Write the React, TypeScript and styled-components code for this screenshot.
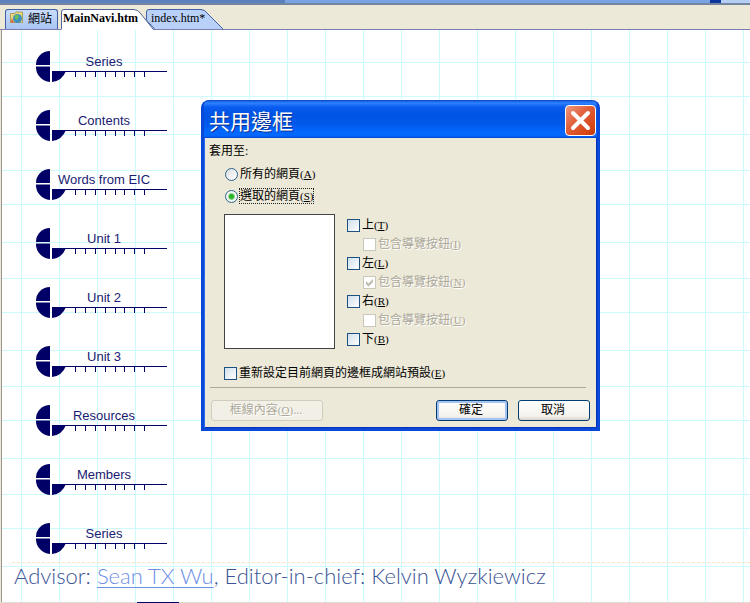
import React from "react";
import styled, { createGlobalStyle, css } from "styled-components";

const GlobalStyle = createGlobalStyle`
  * { box-sizing: border-box; }
  html, body { margin: 0; padding: 0; }
  body {
    font-family: "Liberation Serif", "Noto Sans CJK TC", serif;
    font-size: 12px;
    background: #ece9d8;
  }
`;

const Page = styled.div`
  position: relative;
  display: flex;
  flex-direction: column;
  min-height: 100vh;
`;

const WindowEdge = styled.div`
  display: flex;
  justify-content: flex-end;
  height: 5px;
  background: linear-gradient(90deg, #5b82bd 38%, #78a4e4 38%);
  border-bottom: 2px solid #75849f;
`;

const EdgeEnd = styled.div`
  width: 40px;
  border-left: 11px solid #0a369d;
  background: #b6cff5;
`;

const TabBar = styled.div`
  display: flex;
  align-items: flex-end;
  height: 25px;
  padding-left: 5px;
  background: #ece9d8;
  border-bottom: 1px solid #7c7cb4;
`;

const SiteTab = styled.button`
  display: flex;
  align-items: center;
  gap: 4px;
  width: 53px;
  height: 20px;
  margin-right: 3px;
  padding: 0 0 4px 4px;
  border: 1px solid #3f5fa6;
  border-bottom: 0;
  border-radius: 3px 3px 0 0;
  background: linear-gradient(#c9dcfa, #a9c5f4);
  font: 12px "Noto Sans CJK TC", sans-serif;
  white-space: nowrap;
`;

const FileTab = styled.button<{ $active?: boolean }>`
  display: grid;
  flex: none;
  width: ${(p) => (p.$active ? 94 : 78)}px;
  height: ${(p) => (p.$active ? 21 : 20)}px;
  margin-right: ${(p) => (p.$active ? -9 : 0)}px;
  margin-bottom: ${(p) => (p.$active ? -1 : 0)}px;
  padding: 0;
  border: 0;
  background: none;
  position: relative;
  z-index: ${(p) => (p.$active ? 1 : 0)};
  text-align: left;
  font-family: "Liberation Serif", serif;
  font-size: 12px;
  font-weight: ${(p) => (p.$active ? 700 : 400)};
  line-height: 18px;
  > * { grid-area: 1 / 1; }
`;

const TabText = styled.span`
  padding-left: 2px;
  z-index: 1;
`;

const Canvas = styled.main`
  flex: 1;
  display: flex;
  flex-direction: column;
  margin-left: 1px;
  padding-top: 21px;
  border-left: 1px solid #9a988c;
  background-color: #fff;
  background-image:
    linear-gradient(90deg, #cdfafa 1px, transparent 1px),
    linear-gradient(transparent 32px, #cdfafa 32px 33px, transparent 33px 66px, #cdfafa 66px 67px, transparent 67px 104px, #cdfafa 104px 105px, transparent 105px);
  background-size: 38px 100%, 100% 108px;
  background-position: 19px 0, 0 0;
`;

const Nav = styled.nav`
  display: flex;
  flex-direction: column;
  align-items: flex-start;
  gap: 28px;
  padding-left: 34px;
`;

const NavLink = styled.a`
  display: grid;
  width: 131px;
  height: 31px;
  color: #1a1a72;
  font: 13px/22px "Liberation Sans", sans-serif;
  text-align: center;
  text-decoration: none;
  > * { grid-area: 1 / 1; }
`;

const NavText = styled.span`
  padding-left: 5px;
  z-index: 1;
`;

const Credits = styled.footer`
  margin: 8px 0 0 10px;
  padding: 0 0 0 2px;
  border-top: 1px dashed #f3ecc8;
  color: #3b5494;
  font: 300 22px/26px Lato, sans-serif;
  white-space: nowrap;
  a { color: #6e8fe6; text-underline-offset: 3px; text-decoration-thickness: 1px; }
`;

const BottomEdge = styled.div`
  height: 1px;
  padding-left: 137px;
  background: #deddcf;
`;

const BottomMark = styled.div`
  width: 42px;
  height: 1px;
  background: #000066;
`;

const Dialog = styled.section`
  position: absolute;
  z-index: 2;
  left: 201px;
  top: 100px;
  width: 399px;
  border-radius: 8px 8px 0 0;
  overflow: hidden;
  background: #ece9d8;
  border: solid #0a48d8;
  border-width: 0 3px 3px;
  box-shadow: inset 1px 0 #2a6cf0, inset -1px -1px #0831b9;
`;

const TitleBar = styled.header`
  display: flex;
  align-items: center;
  justify-content: space-between;
  height: 38px;
  margin: 0 -3px;
  padding: 2px 4px 0 8px;
  background: linear-gradient(#0a46c4, #2f83ff 3px, #0a5cf0 7px, #0054e3 14px, #0058ea 24px, #0468ff 32px, #0366fd 36px, #0042cc);
`;

const Title = styled.h1`
  margin: 0;
  color: #fff;
  font: 400 21px/30px "Noto Sans CJK TC", sans-serif;
  text-shadow: 1px 1px #0a2f90;
`;

const CloseButton = styled.button`
  width: 31px;
  height: 31px;
  padding: 0;
  border: 1px solid #fff;
  border-radius: 4px;
  background: linear-gradient(135deg, #ee9a80, #e2623e 40%, #d64616 80%, #c03c12);
  svg { display: block; }
`;

const Body = styled.form`
  padding: 4px 10px 7px 5px;
  line-height: 18px;
`;

const Choices = styled.fieldset`
  display: flex;
  flex-direction: column;
  align-items: flex-start;
  gap: 4px;
  margin: 0;
  padding: 0 0 0 16px;
  border: 0;
  legend { margin: 0 0 5px -16px; padding: 0; }
`;

const Option = styled.label<{ $disabled?: boolean; $nested?: boolean }>`
  display: flex;
  align-items: center;
  gap: 2px;
  height: ${(p) => (p.$nested ? 20 : 18)}px;
  padding-left: ${(p) => (p.$nested ? 16 : 0)}px;
  white-space: nowrap;
  ${(p) => p.$disabled && css`color: #aca899; text-shadow: 1px 1px #fff;`}
`;

const Caption = styled.span<{ $focused?: boolean }>`
  line-height: 14px;
  outline: ${(p) => (p.$focused ? "1px dotted #222" : "none")};
`;

const Accel = styled.span`
  font-size: 11px;
`;

const Radio = styled.input.attrs({ type: "radio" })`
  appearance: none;
  width: 13px;
  height: 13px;
  margin: 0;
  border: 1px solid #2c628b;
  border-radius: 50%;
  background: linear-gradient(135deg, #dcdfe0, #fff);
  &:checked { background: radial-gradient(circle, #2cb52a 2px, #f4f6f3 4px); }
`;

const CheckInput = styled.input.attrs({ type: "checkbox" })`
  appearance: none;
  width: 13px;
  height: 13px;
  margin: 0;
  border: 1px solid #1c5180;
  background: linear-gradient(135deg, #d0dfec, #fff);
  &:disabled { border-color: #cac8bb; background: #fff; }
`;

const CheckBox = styled.span`
  display: grid;
  > * { grid-area: 1 / 1; }
  svg { z-index: 1; pointer-events: none; }
`;

const Borders = styled.div`
  display: flex;
  gap: 12px;
  padding: 9px 0 0 15px;
`;

const Preview = styled.div`
  width: 111px;
  height: 135px;
  border: 1px solid #444;
  background: #fff;
`;

const Sides = styled.div`
  display: flex;
  flex-direction: column;
  padding-top: 2px;
  line-height: 18px;
`;

const ResetRow = styled.div`
  margin: 15px 1px 0;
  padding: 0 0 5px 14px;
  border-bottom: 1px solid #aca899;
`;

const Actions = styled.div`
  display: flex;
  gap: 10px;
  padding-top: 12px;
  margin-right: -3px;
`;

const Button = styled.button<{ $wide?: boolean; $primary?: boolean }>`
  width: ${(p) => (p.$wide ? 112 : 72)}px;
  height: 21px;
  margin-right: ${(p) => (p.$wide ? "auto" : 0)};
  margin-left: ${(p) => (p.$wide ? 2 : 0)}px;
  padding: 0 2px 2px 0;
  border: 1px solid #003c74;
  border-radius: 3px;
  background: linear-gradient(#fff, #f3f2ec 80%, #d9d3c8);
  color: #000;
  font: 12px/16px "Liberation Serif", "Noto Sans CJK TC", serif;
  ${(p) => p.$primary && css`box-shadow: inset 0 0 0 2px #a5c3f2;`}
  &:disabled {
    border-color: #d0cdbf;
    background: #f2f0e6;
    color: #aca899;
    text-shadow: 1px 1px #fff;
  }
`;

const navItems = ["Series", "Contents", "Words from EIC", "Unit 1", "Unit 2", "Unit 3", "Resources", "Members", "Series"];
const ticks = [39, 49, 59, 69, 79, 88, 98, 108];

const NavDrawing = () => (
  <svg width="131" height="31" viewBox="0 0 131 31" aria-hidden="true">
    <g fill="#000066">
      <path d="M14 0A14 14 0 0 0 0 14H14Z" />
      <path d="M0 15.5H14V31A15 15 0 0 1 0 15.5Z" />
      <path d="M16 20H30Q26 30 16 31Z" />
      <rect x="16" y="20" width="115" height="1" />
      {ticks.map((x) => <rect key={x} x={x} y="21" width="1" height="5" />)}
    </g>
  </svg>
);

const SiteIcon = () => (
  <svg width="14" height="13" viewBox="0 0 14 13" aria-hidden="true">
    <path d="M0.5 2.5H5L6 1H12.5V11.5H0.5Z" fill="#f2d77a" stroke="#a6a05c" />
    <circle cx="7.5" cy="7.5" r="4.5" fill="#3f8fbf" />
    <path d="M5 4Q9 3 9 6L7 9L5 8Z" fill="#67bf5b" />
    <path d="M0.5 11.5L2 7L4 12Z" fill="#d86b4c" />
  </svg>
);

type CheckProps = { text: string; accel: string; nested?: boolean; disabled?: boolean; checked?: boolean };

const Key = ({ letter }: { letter: string }) => <Accel>(<u>{letter}</u>)</Accel>;

const Check = ({ text, accel, nested, disabled, checked }: CheckProps) => (
  <Option $disabled={disabled} $nested={nested}>
    <CheckBox>
      <CheckInput disabled={disabled} defaultChecked={checked} />
      {checked && (
        <svg width="13" height="13" viewBox="0 0 13 13" aria-hidden="true">
          <path d="M3 5V8L5.5 10.5L10 6V3L5.5 7.5Z" fill="#bdbbb0" />
        </svg>
      )}
    </CheckBox>
    <Caption>{text}<Key letter={accel} /></Caption>
  </Option>
);

export default function App() {
  return (
    <>
      <GlobalStyle />
      <Page>
        <WindowEdge><EdgeEnd /></WindowEdge>
        <TabBar>
          <SiteTab><SiteIcon />網站</SiteTab>
          <FileTab $active>
            <svg width="94" height="21" aria-hidden="true">
              <path d="M0.5 21V3Q0.5 0.5 3 0.5H73Q77 0.5 80 5L92 19.5V21Z" fill="#fff" />
              <path d="M0.5 20V3Q0.5 0.5 3 0.5H73Q77 0.5 80 5L92 20" fill="none" stroke="#52659a" />
            </svg>
            <TabText>MainNavi.htm</TabText>
          </FileTab>
          <FileTab>
            <svg width="78" height="20" aria-hidden="true">
              <path d="M8.5 20L0.5 11V3Q0.5 0.5 3 0.5H55Q59 0.5 62 5L77 20" fill="#b9d1f8" stroke="#3f5fa6" />
            </svg>
            <TabText>&nbsp;index.htm*</TabText>
          </FileTab>
        </TabBar>
        <Canvas>
          <Nav>
            {navItems.map((name, i) => (
              <NavLink href="#" key={i}><NavDrawing /><NavText>{name}</NavText></NavLink>
            ))}
          </Nav>
          <Credits>
            Advisor: <a href="#">Sean TX Wu</a>, Editor-in-chief: Kelvin Wyzkiewicz
          </Credits>
        </Canvas>
        <BottomEdge><BottomMark /></BottomEdge>
        <Dialog role="dialog" aria-labelledby="dialog-title">
          <TitleBar>
            <Title id="dialog-title">共用邊框</Title>
            <CloseButton aria-label="Close">
              <svg width="29" height="29" viewBox="0 0 29 29">
                <path d="M7 7L22 22M22 7L7 22" stroke="#fff" strokeWidth="4" strokeLinecap="round" />
              </svg>
            </CloseButton>
          </TitleBar>
          <Body>
            <Choices>
              <legend>套用至:</legend>
              <Option><Radio name="scope" /><Caption>所有的網頁<Key letter="A" /></Caption></Option>
              <Option><Radio name="scope" defaultChecked /><Caption $focused>選取的網頁<Key letter="S" /></Caption></Option>
            </Choices>
            <Borders>
              <Preview />
              <Sides>
                <Check text="上" accel="T" />
                <Check text="包含導覽按鈕" accel="I" nested disabled />
                <Check text="左" accel="L" />
                <Check text="包含導覽按鈕" accel="N" nested disabled checked />
                <Check text="右" accel="R" />
                <Check text="包含導覽按鈕" accel="U" nested disabled />
                <Check text="下" accel="B" />
              </Sides>
            </Borders>
            <ResetRow><Check text="重新設定目前網頁的邊框成網站預設" accel="E" /></ResetRow>
            <Actions>
              <Button type="button" $wide disabled>框線內容<Key letter="O" />...</Button>
              <Button type="button" $primary>確定</Button>
              <Button type="button">取消</Button>
            </Actions>
          </Body>
        </Dialog>
      </Page>
    </>
  );
}
